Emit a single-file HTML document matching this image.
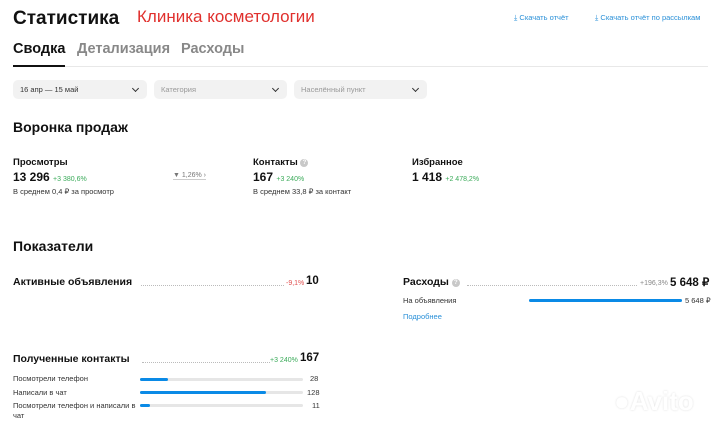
<!DOCTYPE html>
<html><head><meta charset="utf-8"><style>
*{margin:0;padding:0;box-sizing:border-box}
body{width:720px;height:428px;background:#fff;font-family:"Liberation Sans",sans-serif;color:#111;position:relative;overflow:hidden}
.a{position:absolute;white-space:nowrap}
.dd{position:absolute;top:80px;height:19px;background:#f2f2f2;border-radius:5px;font-size:7.5px;line-height:19px;padding-left:7px;color:#333}
.dd.g{color:#999}
.dd:after{content:"";position:absolute;right:9px;top:6px;width:4px;height:4px;border-right:1.3px solid #333;border-bottom:1.3px solid #333;transform:rotate(45deg)}
.dot{position:absolute;border-bottom:1px dotted #bbb;height:1px}
.bar{position:absolute;height:3px;background:#e6e6e6;border-radius:2px}
.bar i{position:absolute;left:0;top:0;height:3px;background:#0a8ae6;border-radius:2px}
.sm{font-size:7.5px;color:#333}
.q{display:inline-block;width:8px;height:8px;border-radius:50%;background:#c8c8c8;color:#fff;font-size:6px;line-height:8px;text-align:center;vertical-align:1px;font-weight:bold}
</style></head><body>
<div class="a" style="left:13px;top:8px;font-size:19px;font-weight:bold">Статистика</div>
<div class="a" style="left:137px;top:7px;font-size:17px;color:#e0302d">Клиника косметологии</div>
<div class="a" style="left:514px;top:13px;font-size:7.5px;color:#2a90d8">⤓ Скачать отчёт</div>
<div class="a" style="left:595px;top:13px;font-size:7.5px;color:#2a90d8">⤓ Скачать отчёт по рассылкам</div>
<div class="a" style="left:13px;top:41px;font-size:14.5px;font-weight:bold">Сводка</div>
<div class="a" style="left:77px;top:41px;font-size:14.5px;font-weight:bold;color:#888">Детализация</div>
<div class="a" style="left:181px;top:41px;font-size:14.5px;font-weight:bold;color:#888">Расходы</div>
<div class="a" style="left:13px;top:66px;width:695px;height:1px;background:#e8e8e8"></div>
<div class="a" style="left:13px;top:65px;width:52px;height:2px;background:#111"></div>
<div class="dd" style="left:13px;width:134px">16 апр — 15 май</div>
<div class="dd g" style="left:154px;width:133px">Категория</div>
<div class="dd g" style="left:294px;width:133px">Населённый пункт</div>
<div class="a" style="left:13px;top:119px;font-size:14px;font-weight:bold">Воронка продаж</div>
<div class="a" style="left:13px;top:157px;font-size:9.5px;font-weight:bold">Просмотры</div>
<div class="a" style="left:13px;top:170px;font-size:12px;font-weight:bold">13 296 <span style="font-size:7px;color:#3bab5a;font-weight:normal">+3 380,6%</span></div>
<div class="a sm" style="left:13px;top:187px">В среднем 0,4 ₽ за просмотр</div>
<div class="a" style="left:173px;top:172px;font-size:7px;color:#777;border-bottom:1px solid #ccc">▼ 1,26% ›</div>
<div class="a" style="left:253px;top:157px;font-size:9.5px;font-weight:bold">Контакты <span class="q">?</span></div>
<div class="a" style="left:253px;top:170px;font-size:12px;font-weight:bold">167 <span style="font-size:7px;color:#3bab5a;font-weight:normal">+3 240%</span></div>
<div class="a sm" style="left:253px;top:187px">В среднем 33,8 ₽ за контакт</div>
<div class="a" style="left:412px;top:157px;font-size:9.5px;font-weight:bold">Избранное</div>
<div class="a" style="left:412px;top:170px;font-size:12px;font-weight:bold">1 418 <span style="font-size:7px;color:#3bab5a;font-weight:normal">+2 478,2%</span></div>
<div class="a" style="left:13px;top:238px;font-size:14px;font-weight:bold">Показатели</div>
<div class="a" style="left:13px;top:276px;font-size:10.5px;font-weight:bold">Активные объявления</div>
<div class="dot" style="left:141px;top:285px;width:143px"></div>
<div class="a" style="left:286px;top:280px;font-size:7px;color:#e05050">-9,1%</div>
<div class="a" style="left:306px;top:275px;font-size:11.5px;font-weight:bold">10</div>
<div class="a" style="left:403px;top:276px;font-size:10.5px;font-weight:bold">Расходы <span class="q">?</span></div>
<div class="dot" style="left:467px;top:285px;width:170px"></div>
<div class="a" style="left:640px;top:280px;font-size:7px;color:#888">+196,3%</div>
<div class="a" style="left:670px;top:275px;font-size:11.5px;font-weight:bold">5 648 ₽</div>
<div class="a sm" style="left:403px;top:296px">На объявления</div>
<div class="bar" style="left:529px;top:299px;width:153px"><i style="width:153px"></i></div>
<div class="a sm" style="left:685px;top:296px">5 648 ₽</div>
<div class="a" style="left:403px;top:312px;font-size:7.5px;color:#2a90d8">Подробнее</div>
<div class="a" style="left:13px;top:353px;font-size:10.5px;font-weight:bold">Полученные контакты</div>
<div class="dot" style="left:142px;top:362px;width:128px"></div>
<div class="a" style="left:270px;top:357px;font-size:7px;color:#3bab5a">+3 240%</div>
<div class="a" style="left:300px;top:352px;font-size:11.5px;font-weight:bold">167</div>
<div class="a sm" style="left:13px;top:374px">Посмотрели телефон</div>
<div class="bar" style="left:140px;top:378px;width:163px"><i style="width:28px"></i></div>
<div class="a sm" style="left:310px;top:374px">28</div>
<div class="a sm" style="left:13px;top:388px">Написали в чат</div>
<div class="bar" style="left:140px;top:391px;width:163px"><i style="width:126px"></i></div>
<div class="a sm" style="left:307px;top:388px">128</div>
<div class="a sm" style="left:13px;top:401px;line-height:10px;white-space:normal;width:125px">Посмотрели телефон и написали в чат</div>
<div class="bar" style="left:140px;top:404px;width:163px"><i style="width:10px"></i></div>
<div class="a sm" style="left:312px;top:401px">11</div>
<div class="a" style="left:614px;top:386px;font-size:26px;font-weight:bold;color:#fff;text-shadow:0 0 2px #ddd">●Avito</div>
</body></html>
